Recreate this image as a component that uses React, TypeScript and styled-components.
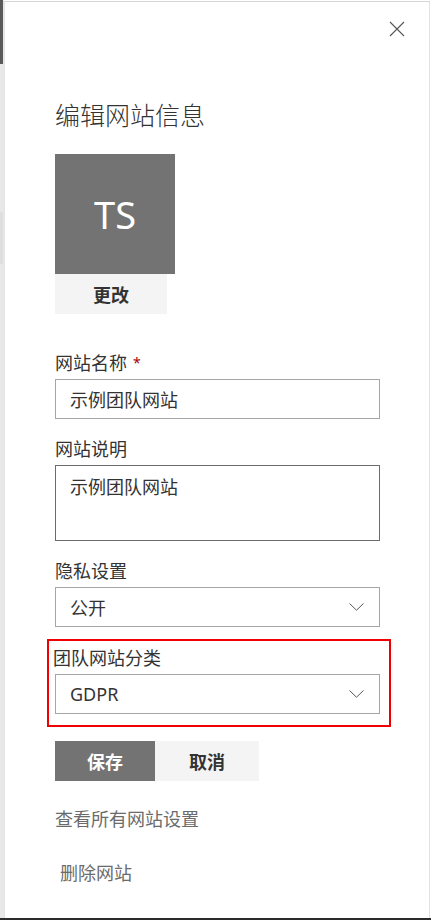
import React from 'react'
import styled, { createGlobalStyle } from 'styled-components'

const font = `"Segoe UI", "Noto Sans", "Noto Sans CJK SC", sans-serif`

const GlobalStyle = createGlobalStyle`
  html, body {
    margin: 0;
    padding: 0;
    background: #ffffff;
  }
  body {
    font-family: ${font};
    color: #333333;
  }
  * {
    box-sizing: border-box;
  }
`

function CloseIcon(): JSX.Element {
  return (
    <svg width="16" height="16" viewBox="0 0 16 16" fill="none">
      <path d="M1 1L15 15M15 1L1 15" stroke="#555555" strokeWidth="1.1" />
    </svg>
  )
}

function Chevron(): JSX.Element {
  return (
    <svg width="15" height="8" viewBox="0 0 15 8" fill="none">
      <path d="M0.5 0.5L7.5 7.2L14.5 0.5" stroke="#555555" strokeWidth="1" />
    </svg>
  )
}

interface FieldProps {
  label: string
  required?: boolean
  shift?: boolean
  first?: boolean
  children: React.ReactNode
}

function Field(props: FieldProps): JSX.Element {
  const { label, required, shift, first, children } = props
  return (
    <FieldBox first={first}>
      <Label shift={shift}>
        {label}
        {required && <Required>*</Required>}
      </Label>
      {children}
    </FieldBox>
  )
}

export default function App(): JSX.Element {
  return (
    <>
      <GlobalStyle />
      <Screen>
        <Main>
          <Backdrop>
            <BackdropBar />
            <BackdropBlock />
          </Backdrop>
          <Panel>
            <CloseRow>
              <CloseButton aria-label="关闭">
                <CloseIcon />
              </CloseButton>
            </CloseRow>
            <Content>
              <Title>编辑网站信息</Title>
              <Avatar>TS</Avatar>
              <ChangeButton>更改</ChangeButton>

              <Field label="网站名称" required first>
                <TextInput defaultValue="示例团队网站" readOnly />
              </Field>

              <Field label="网站说明">
                <TextArea defaultValue="示例团队网站" readOnly />
              </Field>

              <Field label="隐私设置">
                <Dropdown>
                  <span>公开</span>
                  <Chevron />
                </Dropdown>
              </Field>

              <Highlight>
                <Field label="团队网站分类" shift>
                  <Dropdown>
                    <span>GDPR</span>
                    <Chevron />
                  </Dropdown>
                </Field>
              </Highlight>

              <ButtonRow>
                <ActionButton primary>保存</ActionButton>
                <ActionButton>取消</ActionButton>
              </ButtonRow>

              <LinkText>查看所有网站设置</LinkText>
              <LinkText indent>删除网站</LinkText>
            </Content>
          </Panel>
        </Main>
        <Taskbar />
      </Screen>
    </>
  )
}

const Screen = styled.div`
  display: flex;
  flex-direction: column;
  width: 431px;
  height: 920px;
  overflow: hidden;
`

const Main = styled.div`
  display: flex;
  flex: 1;
  min-height: 0;
`

const Backdrop = styled.div`
  display: flex;
  flex-direction: column;
  width: 4px;
  background: #e8e8e8;
`

const BackdropBar = styled.div`
  width: 3px;
  height: 64px;
  background: #5a5a5a;
`

const BackdropBlock = styled.div`
  width: 3px;
  height: 52px;
  margin-top: 148px;
  background: #dedede;
`

const Panel = styled.div`
  display: flex;
  flex-direction: column;
  width: 426px;
  margin-top: 1px;
  border-top: 1px solid #d4d4d4;
  border-left: 1px solid #e4e4e4;
  border-right: 1px solid #e2e2e2;
  background: #ffffff;
`

const CloseRow = styled.div`
  display: flex;
  justify-content: flex-end;
  padding: 7px 12px 0 0;
`

const CloseButton = styled.button`
  display: flex;
  align-items: center;
  justify-content: center;
  width: 40px;
  height: 40px;
  padding: 0;
  border: none;
  background: transparent;
`

const Content = styled.div`
  display: flex;
  flex-direction: column;
  align-items: flex-start;
  padding: 0 48px 0 50px;
`

const Title = styled.h1`
  margin: 50px 0 23px;
  font-size: 25px;
  font-weight: 300;
  line-height: 32px;
  color: #333333;
`

const Avatar = styled.div`
  display: flex;
  align-items: center;
  justify-content: center;
  width: 120px;
  height: 120px;
  background: #737373;
  color: #ffffff;
  font-size: 38px;
  font-weight: 400;
`

const ChangeButton = styled.button`
  width: 112px;
  height: 40px;
  border: none;
  background: #f4f4f4;
  color: #333333;
  font-family: ${font};
  font-size: 18px;
  font-weight: 700;
`

const FieldBox = styled.div<{ first?: boolean }>`
  display: flex;
  flex-direction: column;
  width: 325px;
  margin-top: ${(p) => (p.first ? '37px' : '18px')};
`

const Label = styled.label<{ shift?: boolean }>`
  display: block;
  margin: 0 0 4px ${(p) => (p.shift ? '-2px' : '0')};
  font-size: 18px;
  line-height: 24px;
  color: #333333;
`

const Required = styled.span`
  margin-left: 6px;
  color: #a80000;
  font-size: 14px;
  vertical-align: top;
`

const TextInput = styled.input`
  width: 100%;
  height: 40px;
  padding: 0 14px;
  border: 1px solid #a6a6a6;
  font-family: ${font};
  font-size: 18px;
  color: #333333;
  outline: none;
`

const TextArea = styled.textarea`
  width: 100%;
  height: 76px;
  padding: 9px 14px;
  border: 1px solid #6b6b6b;
  font-family: ${font};
  font-size: 18px;
  line-height: 24px;
  color: #333333;
  resize: none;
  overflow: hidden;
  outline: none;
`

const Dropdown = styled.div`
  display: flex;
  align-items: center;
  justify-content: space-between;
  width: 100%;
  height: 40px;
  padding: 0 15px 0 14px;
  border: 1px solid #a6a6a6;
  font-size: 18px;
  color: #333333;
`

const Highlight = styled.div`
  margin: 12px -11px 0 -8px;
  padding: 5px 9px 11px 6px;
  border: 2px solid #f00000;

  > div {
    margin-top: 0;
  }
`

const ButtonRow = styled.div`
  display: flex;
  margin-top: 14px;
`

const ActionButton = styled.button<{ primary?: boolean }>`
  width: ${(p) => (p.primary ? '100px' : '104px')};
  height: 40px;
  border: none;
  background: ${(p) => (p.primary ? '#737373' : '#f4f4f4')};
  color: ${(p) => (p.primary ? '#ffffff' : '#333333')};
  font-family: ${font};
  font-size: 18px;
  font-weight: 700;
`

const LinkText = styled.div<{ indent?: boolean }>`
  margin-top: ${(p) => (p.indent ? '30px' : '26px')};
  padding-left: ${(p) => (p.indent ? '5px' : '0')};
  font-size: 18px;
  line-height: 24px;
  color: #6b6b6b;
`

const Taskbar = styled.div`
  height: 2px;
  background: #2b2b2b;
`
